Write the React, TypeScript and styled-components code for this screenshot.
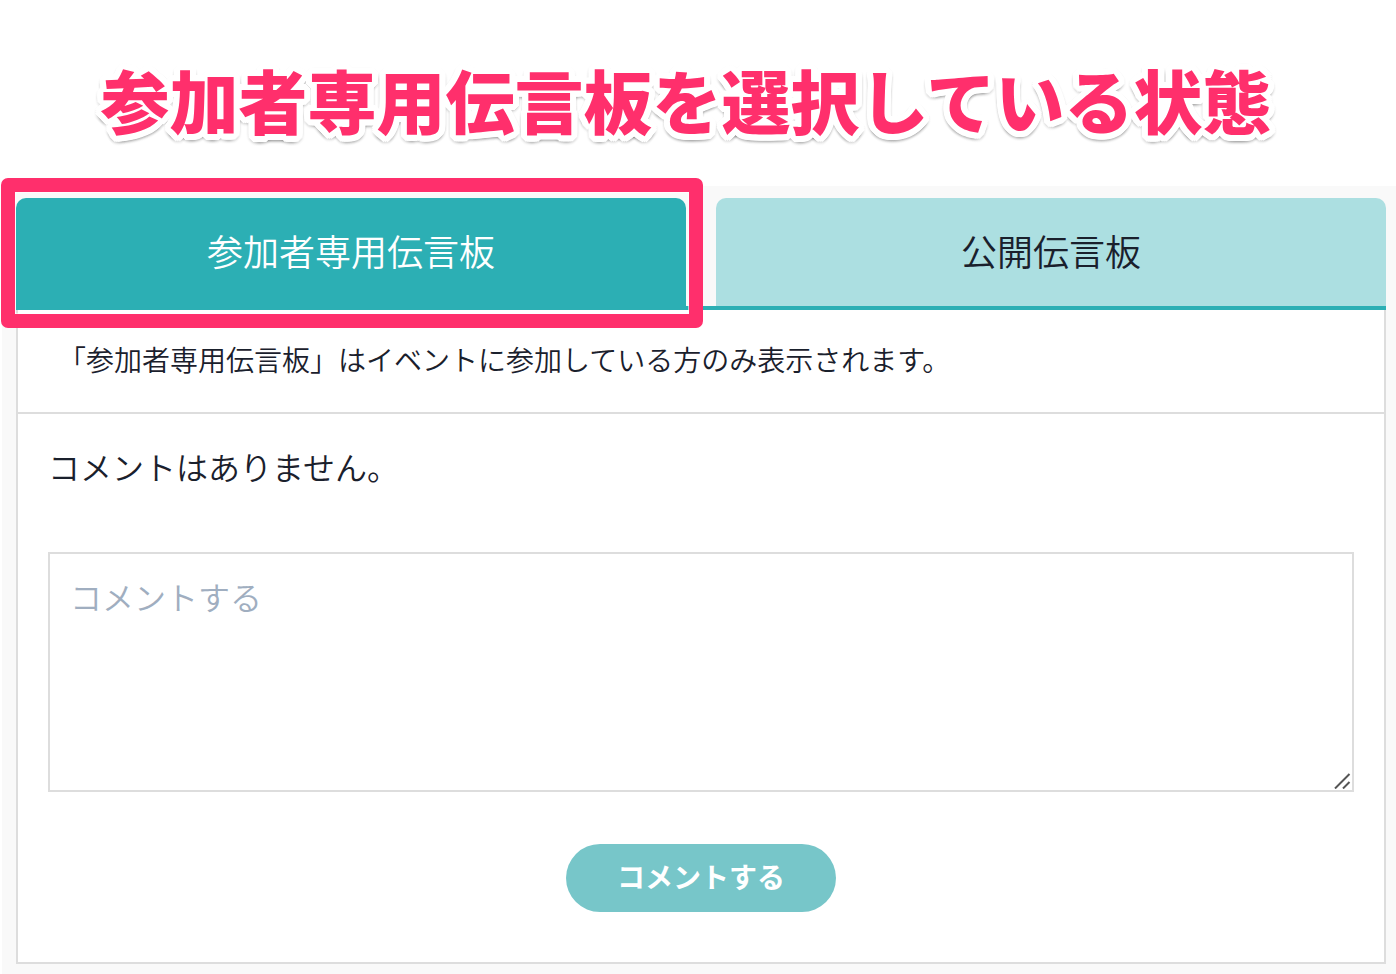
import React, { useState } from "react";
import styled, { createGlobalStyle } from "styled-components";

const teal = "#2cafb4";
const tealSoft = "#acdfe1";
const pink = "#ff2f6c";
const line = "#dddddd";
const ink = "#1a202c";

const ring = (radius: number, color: string, dy = 0, blur = 0) =>
  Array.from({ length: 24 }, (_, i) => {
    const a = (i / 24) * Math.PI * 2;
    return `${Math.round(Math.cos(a) * radius)}px ${Math.round(Math.sin(a) * radius) + dy}px ${blur}px ${color}`;
  });

const titleShadow = [
  ...ring(3, "#fff"),
  ...ring(6, "#fff"),
  ...ring(6, "rgba(0, 0, 0, 0.07)", 2, 3),
].join(", ");

const GlobalStyle = createGlobalStyle`
  *, *::before, *::after { box-sizing: border-box; }
  body {
    margin: 0;
    background: #fff;
    color: ${ink};
    font-family: "Noto Sans CJK JP", sans-serif;
    font-weight: 350;
  }
  button, textarea { font: inherit; color: inherit; }
`;

const Title = styled.h1`
  margin: 0;
  padding: 49px 24px 37px 0;
  text-align: center;
  font-size: 69px;
  line-height: 100px;
  font-weight: 900;
  color: ${pink};
  text-shadow: ${titleShadow};
`;

const Board = styled.section`
  margin-left: 2px;
  padding: 12px 10px 10px 14px;
  background: #f9f9f9;
`;

const TabList = styled.div`
  display: grid;
  grid-template-columns: 1fr 1fr;
  gap: 30px;
  border-bottom: 4px solid ${teal};
`;

const Tab = styled.button<{ $active: boolean }>`
  position: relative;
  height: 108px;
  padding: 0 0 4px;
  border: 0;
  border-radius: 10px 10px 0 0;
  background: ${(p) => (p.$active ? teal : tealSoft)};
  color: ${(p) => (p.$active ? "#fff" : ink)};
  font-size: 36px;
  line-height: 54px;
  cursor: pointer;
`;

const Highlight = styled.span`
  position: absolute;
  inset: -20px -17px -22px -15px;
  border: 14px solid ${pink};
  border-radius: 7px;
  box-shadow: inset 0 0 0 1px rgba(255, 255, 255, 0.6);
  pointer-events: none;
`;

const Panel = styled.div`
  border: 2px solid ${line};
  border-top: 0;
  background: #fff;
`;

const Note = styled.p`
  margin: 0;
  padding: 28px 40px 32px;
  border-bottom: 2px solid ${line};
  font-size: 28px;
  line-height: 42px;
`;

const Comments = styled.div`
  padding: 28px 30px 50px;
`;

const Empty = styled.p`
  margin: 0 0 62px;
  font-size: 32px;
  line-height: 48px;
`;

const Form = styled.form`
  display: flex;
  flex-direction: column;
  align-items: center;
  gap: 52px;
`;

const Field = styled.div`
  position: relative;
  width: 100%;
`;

const TextArea = styled.textarea`
  display: block;
  width: 100%;
  height: 240px;
  padding: 18px 20px;
  border: 2px solid ${line};
  border-radius: 0;
  background: #fff;
  font-size: 32px;
  line-height: 48px;
  resize: vertical;
  &::placeholder { color: #a0aec0; opacity: 1; }
  &::-webkit-resizer { background: transparent; }
`;

const Grip = styled.svg`
  position: absolute;
  right: 3px;
  bottom: 3px;
  pointer-events: none;
`;

const Submit = styled.button`
  width: 270px;
  height: 68px;
  padding: 0 0 4px;
  border: 0;
  border-radius: 34px;
  background: #77c6c9;
  color: #fff;
  font-size: 28px;
  line-height: 42px;
  font-weight: 700;
  cursor: pointer;
`;

const tabs = ["参加者専用伝言板", "公開伝言板"];

export default function App() {
  const [active, setActive] = useState(0);
  return (
    <>
      <GlobalStyle />
      <main lang="ja">
        <Title>参加者専用伝言板を選択している状態</Title>
        <Board>
          <TabList role="tablist">
            {tabs.map((name, i) => (
              <Tab
                key={name}
                id={`tab-${i}`}
                type="button"
                role="tab"
                aria-selected={active === i}
                aria-controls="board-panel"
                $active={active === i}
                onClick={() => setActive(i)}
              >
                {name}
                {active === i && <Highlight />}
              </Tab>
            ))}
          </TabList>
          <Panel id="board-panel" role="tabpanel" aria-labelledby={`tab-${active}`}>
            <Note>「参加者専用伝言板」はイベントに参加している方のみ表示されます。</Note>
            <Comments>
              <Empty>コメントはありません。</Empty>
              <Form onSubmit={(e) => e.preventDefault()}>
                <Field>
                  <TextArea aria-label="コメントする" placeholder="コメントする" />
                  <Grip width="17" height="16" viewBox="0 0 17 16" fill="none" stroke="#555" strokeWidth="2" aria-hidden="true">
                    <path d="M1 15.500 15.500 1M9 15.500l6.500-6.500" />
                  </Grip>
                </Field>
                <Submit type="submit">コメントする</Submit>
              </Form>
            </Comments>
          </Panel>
        </Board>
      </main>
    </>
  );
}
